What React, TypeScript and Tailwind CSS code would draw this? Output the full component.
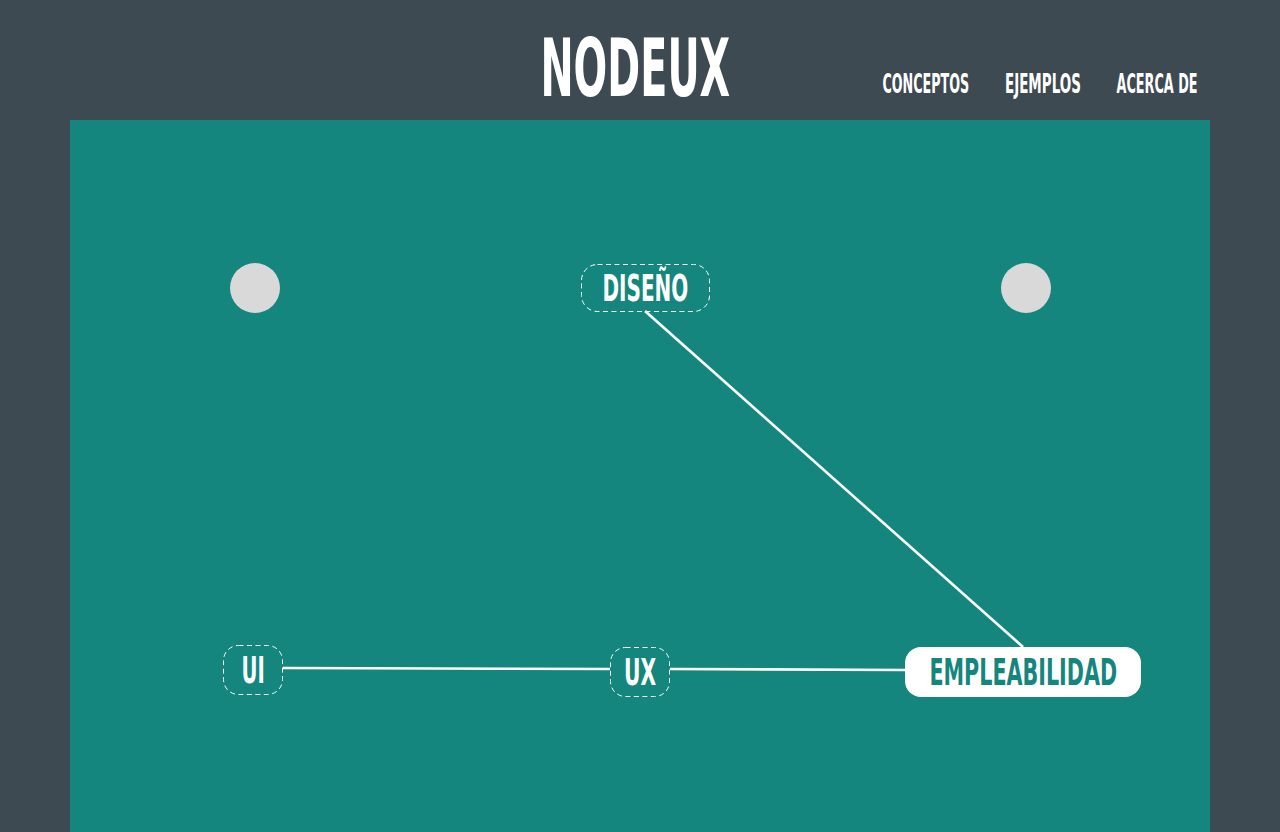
import React, { useLayoutEffect, useRef, useState } from "react";

const FONT = "font-['DejaVu_Sans_Condensed','DejaVu_Sans',sans-serif]";

function FitText({ text, width, className }: { text: string; width: number; className?: string }) {
  const ref = useRef<HTMLSpanElement>(null);
  const [scale, setScale] = useState(1);
  useLayoutEffect(() => {
    if (ref.current) {
      const w = ref.current.offsetWidth;
      if (w > 0) setScale(width / w);
    }
  }, [text, width]);
  return (
    <div className="flex justify-center" style={{ width }}>
      <span
        ref={ref}
        className={`inline-block whitespace-nowrap origin-center font-bold ${FONT} ${className ?? ""}`}
        style={{ transform: `scaleX(${scale})`, fontStretch: "condensed" }}
      >
        {text}
      </span>
    </div>
  );
}

function Dashed({ w, h, r }: { w: number; h: number; r: number }) {
  return (
    <svg className="absolute inset-0 pointer-events-none" width={w} height={h}>
      <rect x={0.5} y={0.5} width={w - 1} height={h - 1} rx={r} fill="none" stroke="white" strokeWidth={1} strokeDasharray="5 3.5" />
    </svg>
  );
}

function DashNode({ label, left, top, w, h, r, tw }: { label: string; left: number; top: number; w: number; h: number; r: number; tw: number }) {
  return (
    <div className="absolute flex items-center justify-center" style={{ left, top, width: w, height: h }}>
      <Dashed w={w} h={h} r={r} />
      <FitText text={label} width={tw} className="text-[38px] leading-none text-white" />
    </div>
  );
}

export default function App() {
  return (
    <div className="w-[1280px] h-[832px] overflow-hidden bg-[#3e4a51]">
      <header className="h-[120px] flex items-start pl-[540px]">
        <div className="mt-[28px]">
          <FitText text="NODEUX" width={190} className="text-[81px] leading-none text-white" />
        </div>
        <nav className="ml-[152px] mt-[71px] flex gap-[36px]">
          <FitText text="CONCEPTOS" width={87} className="text-[26px] leading-none text-white" />
          <FitText text="EJEMPLOS" width={76} className="text-[26px] leading-none text-white" />
          <FitText text="ACERCA DE" width={81} className="text-[26px] leading-none text-white" />
        </nav>
      </header>
      <main className="mx-[70px] h-[712px] bg-[#14867e] relative">
        <svg className="absolute inset-0" width={1140} height={712}>
          <line x1={213} y1={548} x2={540} y2={549} stroke="white" strokeWidth={2.6} />
          <line x1={600} y1={549} x2={835} y2={550} stroke="white" strokeWidth={2.6} />
          <line x1={575} y1={191} x2={953} y2={527} stroke="white" strokeWidth={2.6} />
        </svg>
        <div className="absolute left-[160px] top-[143px] w-[50px] h-[50px] rounded-full bg-[#d9d9d9]" />
        <div className="absolute left-[931px] top-[143px] w-[50px] h-[50px] rounded-full bg-[#d9d9d9]" />
        <DashNode label="DISEÑO" left={511} top={144} w={129} h={48} r={16} tw={86} />
        <DashNode label="UI" left={153} top={525} w={60} h={50} r={15} tw={23} />
        <DashNode label="UX" left={540} top={527} w={60} h={50} r={15} tw={32} />
        <div className="absolute left-[835px] top-[527px] w-[236px] h-[50px] rounded-[16px] bg-white flex items-center justify-center">
          <FitText text="EMPLEABILIDAD" width={188} className="text-[38px] leading-none text-[#14867e]" />
        </div>
      </main>
    </div>
  );
}
